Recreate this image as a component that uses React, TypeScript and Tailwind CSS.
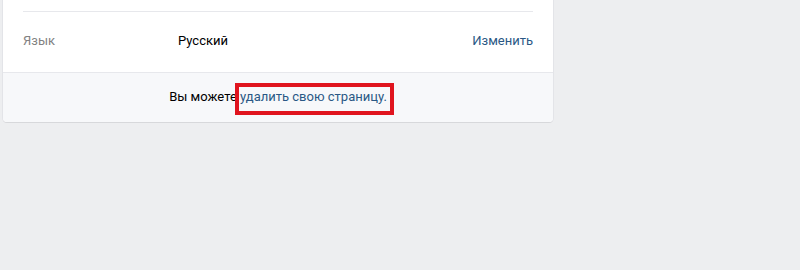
export default function App() {
  return (
    <div className="w-[800px] h-[270px] bg-[#edeef0] overflow-hidden font-['Roboto',sans-serif] text-[13px]">
      <div className="relative ml-[3px] w-[550px] bg-white rounded-b-[4px] shadow-[0_1px_0_0_#d7d8db,0_0_0_1px_#e3e4e8]">
        <div className="px-5 pt-[11px]">
          <div className="h-px bg-[#e7e8ec]" />
          <div className="flex items-center h-[60px] pb-[3px]">
            <div className="w-[155px] text-[#828282]">Язык</div>
            <div className="flex-1 text-black">Русский</div>
            <a className="text-[#2a5885] cursor-pointer">Изменить</a>
          </div>
        </div>
        <div className="h-[50px] flex items-center justify-center bg-[#f7f8fa] border-t border-[#e7e8ec] rounded-b-[4px] text-black pb-px">
          <span>
            Вы можете <a className="text-[#2a5885] cursor-pointer">удалить свою страницу.</a>
          </span>
        </div>
        <div className="absolute left-[232px] top-[83px] w-[159px] h-[32px] border-4 border-[#e0141e] pointer-events-none" />
      </div>
    </div>
  );
}
